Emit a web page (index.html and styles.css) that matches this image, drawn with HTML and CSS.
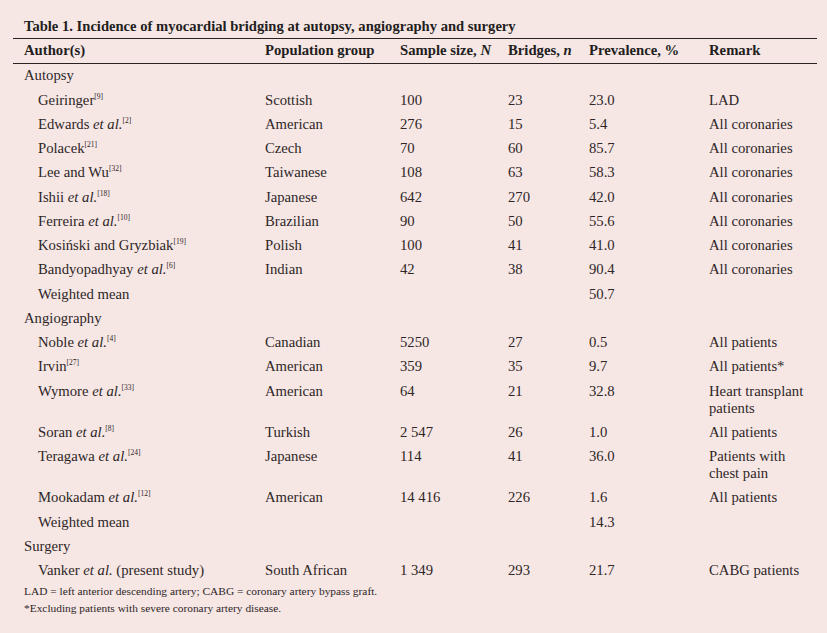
FILE: index.html
```html
<!DOCTYPE html>
<html>
<head>
<meta charset="utf-8">
<link rel="stylesheet" href="styles.css">
</head>
<body>
<div class="page">
  <div class="title">Table 1. Incidence of myocardial bridging at autopsy, angiography and surgery</div>
  <table class="data">
    <colgroup>
      <col class="c1"><col class="c2"><col class="c3"><col class="c4"><col class="c5"><col class="c6">
    </colgroup>
    <thead>
      <tr><th>Author(s)</th><th>Population group</th><th>Sample size, <i>N</i></th><th>Bridges, <i>n</i></th><th>Prevalence, %</th><th>Remark</th></tr>
    </thead>
    <tbody>
      <tr><td class="cat" colspan="6">Autopsy</td></tr>
      <tr><td class="ind">Geiringer<sup>[9]</sup></td><td>Scottish</td><td>100</td><td>23</td><td>23.0</td><td>LAD</td></tr>
      <tr><td class="ind">Edwards <i>et al.</i><sup>[2]</sup></td><td>American</td><td>276</td><td>15</td><td>5.4</td><td>All coronaries</td></tr>
      <tr><td class="ind">Polacek<sup>[21]</sup></td><td>Czech</td><td>70</td><td>60</td><td>85.7</td><td>All coronaries</td></tr>
      <tr><td class="ind">Lee and Wu<sup>[32]</sup></td><td>Taiwanese</td><td>108</td><td>63</td><td>58.3</td><td>All coronaries</td></tr>
      <tr><td class="ind">Ishii <i>et al.</i><sup>[18]</sup></td><td>Japanese</td><td>642</td><td>270</td><td>42.0</td><td>All coronaries</td></tr>
      <tr><td class="ind">Ferreira <i>et al.</i><sup>[10]</sup></td><td>Brazilian</td><td>90</td><td>50</td><td>55.6</td><td>All coronaries</td></tr>
      <tr><td class="ind">Kosiński and Gryzbiak<sup>[19]</sup></td><td>Polish</td><td>100</td><td>41</td><td>41.0</td><td>All coronaries</td></tr>
      <tr><td class="ind">Bandyopadhyay <i>et al.</i><sup>[6]</sup></td><td>Indian</td><td>42</td><td>38</td><td>90.4</td><td>All coronaries</td></tr>
      <tr><td class="ind">Weighted mean</td><td></td><td></td><td></td><td>50.7</td><td></td></tr>
      <tr><td class="cat" colspan="6">Angiography</td></tr>
      <tr><td class="ind">Noble <i>et al.</i><sup>[4]</sup></td><td>Canadian</td><td>5250</td><td>27</td><td>0.5</td><td>All patients</td></tr>
      <tr><td class="ind">Irvin<sup>[27]</sup></td><td>American</td><td>359</td><td>35</td><td>9.7</td><td>All patients*</td></tr>
      <tr><td class="ind">Wymore <i>et al.</i><sup>[33]</sup></td><td>American</td><td>64</td><td>21</td><td>32.8</td><td>Heart transplant patients</td></tr>
      <tr><td class="ind">Soran <i>et al.</i><sup>[8]</sup></td><td>Turkish</td><td>2 547</td><td>26</td><td>1.0</td><td>All patients</td></tr>
      <tr><td class="ind">Teragawa <i>et al.</i><sup>[24]</sup></td><td>Japanese</td><td>114</td><td>41</td><td>36.0</td><td>Patients with chest pain</td></tr>
      <tr><td class="ind">Mookadam <i>et al.</i><sup>[12]</sup></td><td>American</td><td>14 416</td><td>226</td><td>1.6</td><td>All patients</td></tr>
      <tr><td class="ind">Weighted mean</td><td></td><td></td><td></td><td>14.3</td><td></td></tr>
      <tr><td class="cat" colspan="6">Surgery</td></tr>
      <tr><td class="ind">Vanker <i>et al.</i> (present study)</td><td>South African</td><td>1 349</td><td>293</td><td>21.7</td><td>CABG patients</td></tr>
    </tbody>
  </table>
  <div class="notes">
    <p>LAD = left anterior descending artery; CABG = coronary artery bypass graft.</p>
    <p>*Excluding patients with severe coronary artery disease.</p>
  </div>
</div>
</body>
</html>
```

FILE: styles.css
```css
html, body {
  margin: 0;
  padding: 0;
  background: #f6e7e5;
}
body {
  font-family: "Liberation Serif", "Times New Roman", serif;
  color: #2e2626;
}
.page {
  width: 804px;
  padding: 18px 0 0 13px;
}
.title {
  font-weight: bold;
  font-size: 14.6px;
  line-height: 16.5px;
  padding-left: 11px;
  margin-bottom: 3px;
  color: #231d1d;
}
.data {
  width: 804px;
  border-collapse: collapse;
  table-layout: fixed;
  font-size: 14.7px;
  line-height: 17px;
}
.c1 { width: 241px; }
.c2 { width: 135px; }
.c3 { width: 108px; }
.c4 { width: 81px; }
.c5 { width: 120px; }
.c6 { width: 119px; }
.data thead tr {
  border-top: 1.5px solid #2a2222;
  border-bottom: 1.5px solid #2a2222;
}
.data th {
  text-align: left;
  font-weight: bold;
  padding: 3.7px 0 3.5px 11px;
  color: #231d1d;
}
.data td {
  padding: 3.63px 0 3.63px 11px;
  vertical-align: top;
}
.data td.ind {
  padding-left: 25px;
}
.data td.cat {
  padding-left: 11px;
}
sup {
  font-size: 7.5px;
  line-height: 0;
  vertical-align: 6px;
}
.notes {
  padding-left: 11px;
  font-size: 11.4px;
  line-height: 17.5px;
}
.notes p {
  margin: 0;
}
```
